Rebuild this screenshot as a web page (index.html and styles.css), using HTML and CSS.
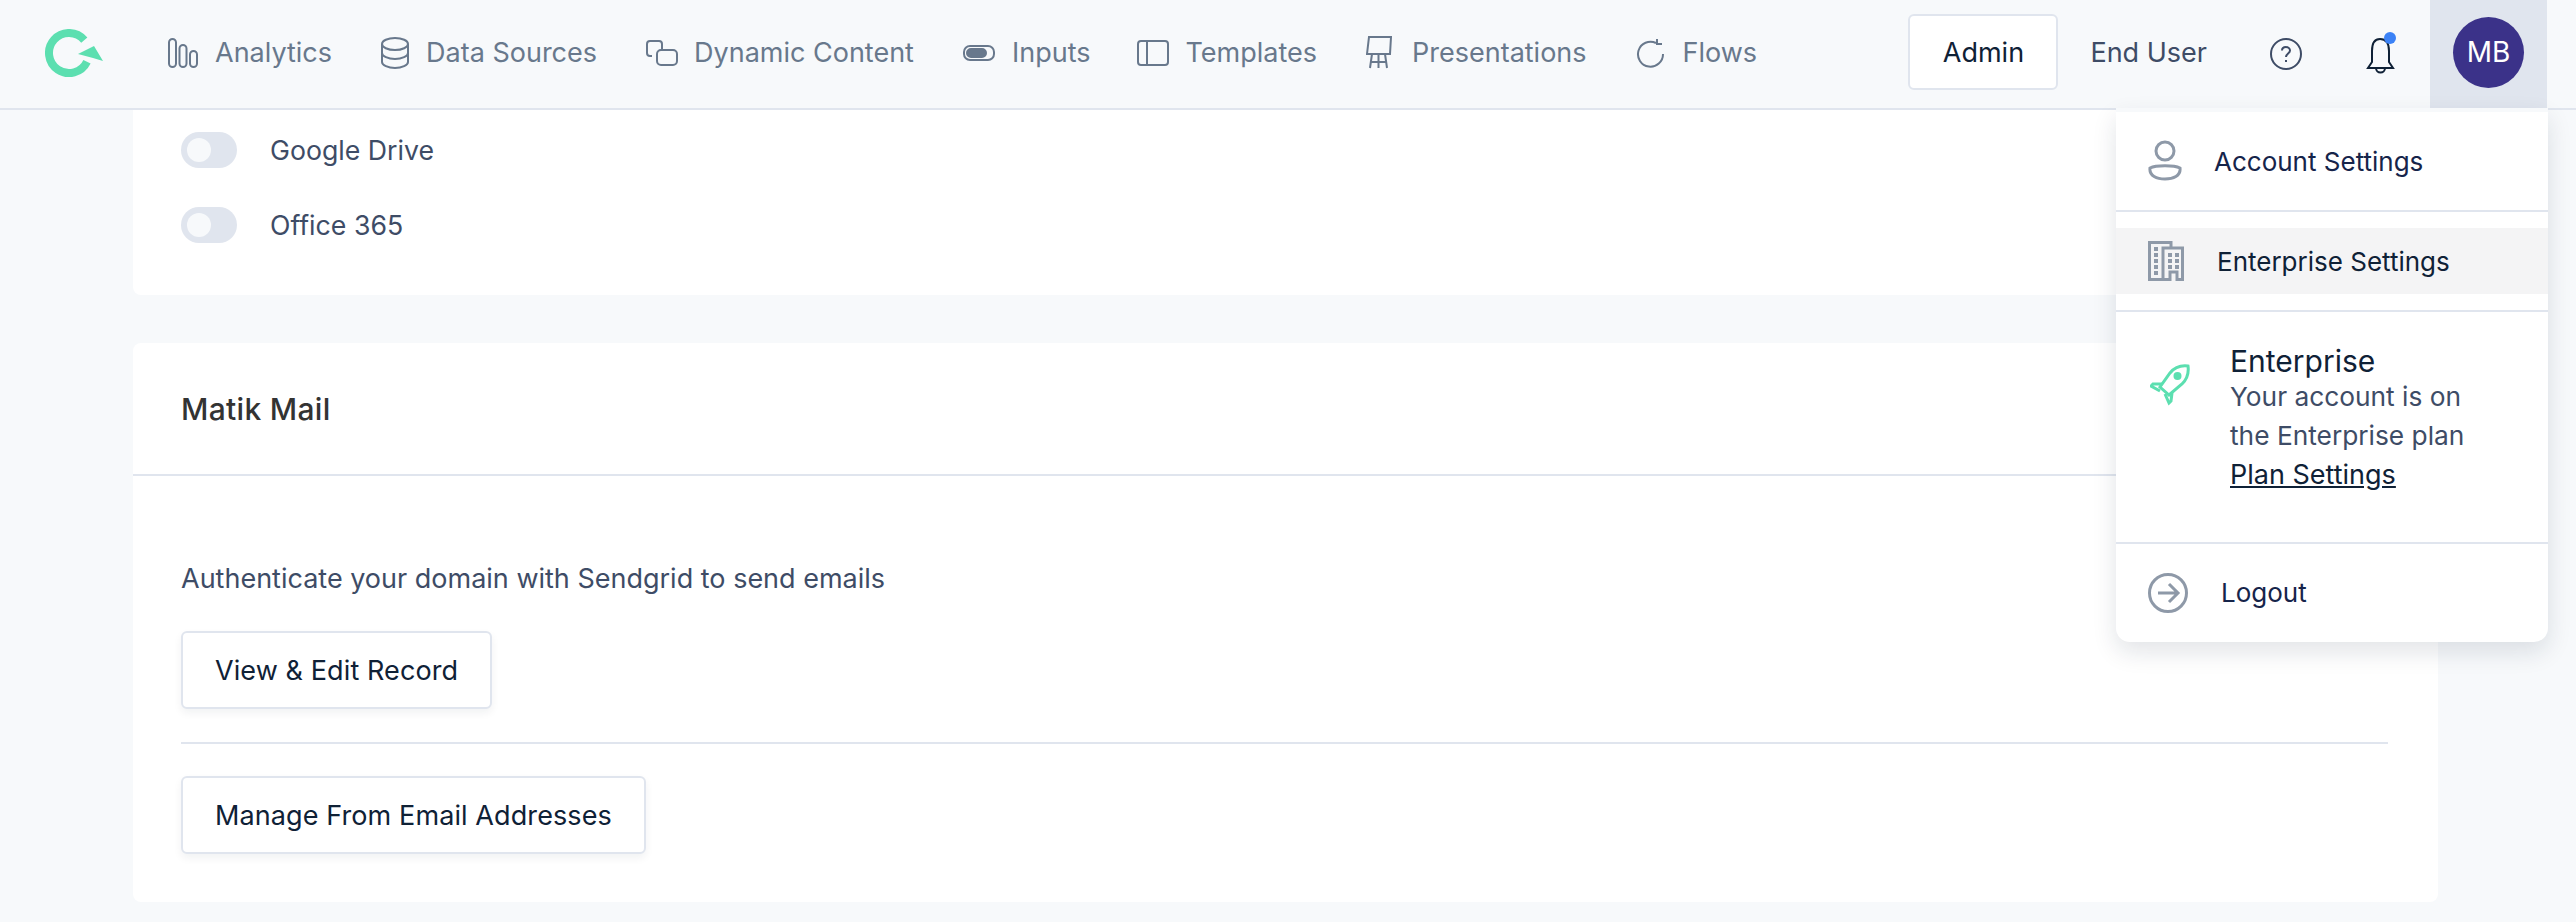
FILE: index.html
```html
<!DOCTYPE html>
<html lang="en">
<head>
    <meta charset="UTF-8">
    <meta name="viewport" content="width=device-width, initial-scale=1.0">
    <title>Enterprise Settings</title>
    <link rel="stylesheet" href="styles.css">
</head>
<body>
    <header class="topbar">
        <a class="logo" href="#">
            <svg width="60" height="50" viewBox="0 0 60 50"><path d="M39.300 11.100A20 20 0 1 0 42 32.700" fill="none" stroke="#5cdfb0" stroke-width="8"/><path d="M33 25L49 17L58 32L48 29Z" fill="#5cdfb0"/></svg>
        </a>
        <nav class="nav">
            <a class="nav-item" href="#">
                <svg width="30" height="30" viewBox="0 0 30 30" class="nav-icon"><rect x="1" y="1" width="7" height="28" rx="3.500"/><rect x="11.500" y="7" width="7" height="22" rx="3.500"/><rect x="22" y="13" width="7" height="16" rx="3.500"/></svg>
                Analytics
            </a>
            <a class="nav-item" href="#">
                <svg width="28" height="32" viewBox="0 0 28 32" class="nav-icon"><ellipse cx="14" cy="7" rx="13" ry="6"/><path d="M1 7V25C1 28 7 31 14 31S27 28 27 25V7M1 16C1 19 7 22 14 22S27 19 27 16"/></svg>
                Data Sources
            </a>
            <a class="nav-item nav-item-tight" href="#">
                <svg width="32" height="26" viewBox="0 0 32 26" class="nav-icon"><rect x="11" y="10" width="20" height="15" rx="4"/><path d="M6 16H4A3 3 0 0 1 1 13V4A3 3 0 0 1 4 1H13A3 3 0 0 1 16 4V10"/></svg>
                Dynamic Content
            </a>
            <a class="nav-item" href="#">
                <svg width="32" height="16" viewBox="0 0 32 16" class="nav-icon"><rect x="1" y="1" width="30" height="14" rx="6"/><rect class="nav-icon-fill" x="4" y="4" width="19" height="8" rx="4"/></svg>
                Inputs
            </a>
            <a class="nav-item nav-item-shift" href="#">
                <svg width="32" height="26" viewBox="0 0 32 26" class="nav-icon"><rect x="1" y="1" width="30" height="24" rx="3"/><path d="M10 1V25"/></svg>
                Templates
            </a>
            <a class="nav-item nav-item-wide" href="#">
                <svg width="26" height="33" viewBox="0 0 26 33" class="nav-icon"><path d="M3 1H25L24 18H1ZM1 18H24M6 18L4 32M19 18L21 32M12.500 18V32M5 26H20"/></svg>
                Presentations
            </a>
            <a class="nav-item" href="#">
                <svg width="30" height="32" viewBox="0 0 30 32" class="nav-icon"><path d="M20 6A12.500 12.500 0 1 0 27 17M21 2V7H26"/></svg>
                Flows
            </a>
        </nav>
        <div class="topbar-right">
            <a class="mode-btn" href="#">Admin</a>
            <a class="mode-link" href="#">End User</a>
            <a class="help" href="#">
                <svg width="32" height="32" viewBox="0 0 32 32" fill="none" stroke="#3e4c66" stroke-width="2"><circle cx="16" cy="16" r="15"/><path d="M12 12.500C12 10 14 9 16 9S20 10.500 20 12.500C20 15.500 16 15.500 16 19"/><path d="M16 22V24"/></svg>
            </a>
            <a class="bell" href="#">
                <svg width="36" height="44" viewBox="0 0 36 44"><path d="M9 19C9 10 12 7 17 7S26 10 26 19V30L30 36H5L9 30ZM13 36A4.500 4.500 0 0 0 22 36" fill="none" stroke="#0f2136" stroke-width="2"/><circle cx="27" cy="6" r="6" fill="#3b82f6"/></svg>
            </a>
            <div class="avatar-wrap"><div class="avatar">MB</div></div>
        </div>
    </header>

    <main class="content">
        <section class="card card-top">
            <div class="toggle-row"><span class="toggle"><span class="knob"></span></span>Google Drive</div>
            <div class="toggle-row"><span class="toggle"><span class="knob"></span></span>Office 365</div>
        </section>
        <section class="card">
            <h2 class="card-title">Matik Mail</h2>
            <div class="card-body">
                <p class="card-text">Authenticate your domain with Sendgrid to send emails</p>
                <button class="btn">View &amp; Edit Record</button>
                <hr class="rule">
                <button class="btn">Manage From Email Addresses</button>
            </div>
        </section>
    </main>

    <div class="menu">
        <a class="menu-row menu-account" href="#">
            <svg width="34" height="42" viewBox="0 0 34 42" class="menu-icon"><circle cx="17" cy="11" r="9"/><path d="M2 28C8 25 26 25 32 28C33 36 25 39 17 39S1 36 2 28Z"/></svg>
            Account Settings
        </a>
        <a class="menu-row menu-enterprise" href="#">
            <svg width="36" height="40" viewBox="0 0 36 40" class="building"><path class="building-line" d="M1.500 40V1.500H23V7M1 38.500H15M15 40V7H34.500V40M15 38.500H22V31H29V38.500H35"/><path d="M6 6h4v4H6zM6 12h4v4H6zM6 18h4v4H6zM6 24h4v4H6zM6 30h4v4H6zM20 12h4v4h-4zM27 12h4v4h-4zM20 18h4v4h-4zM27 18h4v4h-4zM20 24h4v4h-4zM27 24h4v4h-4z"/></svg>
            Enterprise Settings
        </a>
        <div class="plan">
            <svg width="40" height="42" viewBox="0 0 40 42" class="rocket"><path d="M38 2C30 1 24 4 20 9L10 23L19 31L32 20C37 15 39 9 38 2Z"/><path d="M12 20L3 20L1 22L10 27M22 29L21 37L19 39L15 30"/><circle cx="27.500" cy="12" r="4" class="rocket-dot"/></svg>
            <div class="plan-text">
                <div class="plan-name">Enterprise</div>
                <div class="plan-desc">Your account is on<br>the Enterprise plan</div>
                <a class="plan-link" href="#">Plan Settings</a>
            </div>
        </div>
        <a class="menu-row menu-logout" href="#">
            <svg width="40" height="40" viewBox="0 0 40 40" class="menu-icon"><circle cx="20" cy="20" r="18.500"/><path d="M10 20H30M21 11L30 20L21 29"/></svg>
            Logout
        </a>
    </div>
</body>
</html>
```

FILE: styles.css
```css
body {
    margin: 0;
    height: 922px;
    overflow: hidden;
    background-color: #f7f9fb;
    font-family: Inter, sans-serif;
    font-size: 27px;
    color: #3e4c66;
}
a {
    color: inherit;
    text-decoration: none;
}

.topbar {
    display: flex;
    align-items: center;
    height: 110px;
    box-sizing: border-box;
    border-bottom: 2px solid #e0e5ee;
    padding-left: 45px;
}
.logo {
    display: flex;
    width: 123px;
}
.nav {
    display: flex;
    gap: 49px;
    margin-bottom: 3px;
    color: #68788c;
}
.nav-item {
    display: flex;
    align-items: center;
    gap: 17px;
}
.nav-item-tight {
    gap: 16px;
}
.nav-item-shift {
    margin-left: -3px;
}
.nav-item-wide {
    gap: 20px;
}
.nav-icon {
    fill: none;
    stroke: #68788c;
    stroke-width: 2;
}
.nav-icon-fill {
    fill: #68788c;
}
.topbar-right {
    display: flex;
    align-items: center;
    margin-left: auto;
    margin-right: 29px;
    height: 108px;
}
.mode-btn {
    display: flex;
    align-items: center;
    justify-content: center;
    width: 150px;
    height: 76px;
    box-sizing: border-box;
    margin-bottom: 4px;
    background: #fff;
    border: 2px solid #e0e5ee;
    border-radius: 6px;
    color: #0f2136;
}
.mode-link {
    margin-left: 32px;
    margin-bottom: 3px;
}
.help {
    display: flex;
    margin-left: 63px;
}
.bell {
    display: flex;
    margin-left: 61px;
}
.avatar-wrap {
    display: flex;
    align-items: center;
    justify-content: center;
    width: 117px;
    height: 108px;
    margin-left: 31px;
    background: #e0e5ee;
}
.avatar {
    display: flex;
    align-items: center;
    justify-content: center;
    width: 71px;
    height: 71px;
    margin-bottom: 4px;
    border-radius: 50%;
    background: #3b3289;
    color: #fff;
    font-size: 28px;
}

.content {
    display: flex;
    flex-direction: column;
    gap: 48px;
    margin: 0 138px 0 133px;
}
.card {
    background: #fff;
    border-radius: 8px;
}
.card-top {
    height: 185px;
    border-radius: 0 0 8px 8px;
    padding: 22px 48px 0;
    box-sizing: border-box;
}
.toggle-row {
    display: flex;
    align-items: center;
    gap: 33px;
    height: 36px;
    margin-bottom: 39px;
    font-size: 26.7px;
}
.toggle {
    display: flex;
    align-items: center;
    width: 56px;
    height: 36px;
    padding-left: 6px;
    box-sizing: border-box;
    border-radius: 18px;
    background: #e0e5ee;
}
.knob {
    width: 24px;
    height: 24px;
    border-radius: 50%;
    background: #f7f9fb;
}
.card-title {
    margin: 0;
    padding: 0 48px;
    height: 133px;
    line-height: 133px;
    font-size: 30px;
    font-weight: 500;
    letter-spacing: 0.3px;
    color: #333;
    border-bottom: 2px solid #e0e5ee;
    box-sizing: border-box;
}
.card-body {
    padding: 87px 50px 48px 48px;
}
.card-text {
    margin: 0 0 36px;
    line-height: 32px;
}
.btn {
    display: block;
    height: 78px;
    padding: 0 32px;
    background: #fff;
    border: 2px solid #e0e5ee;
    border-radius: 6px;
    box-shadow: 0 4px 8px rgba(15, 33, 54, 0.06);
    font-family: inherit;
    font-size: 27px;
    letter-spacing: 0.1px;
    color: #0f2136;
}
.rule {
    height: 2px;
    margin: 33px 0 32px;
    border: 0;
    background: #e0e5ee;
}

.menu {
    position: absolute;
    top: 108px;
    left: 2116px;
    width: 432px;
    height: 534px;
    box-sizing: border-box;
    background: #fff;
    border-top: 4px solid #f7f9fb;
    border-radius: 0 0 14px 14px;
    box-shadow: 0 10px 24px rgba(15, 33, 54, 0.12);
    font-size: 26px;
    color: #16244a;
}
.menu-row {
    display: flex;
    align-items: center;
}
.menu-icon {
    fill: none;
    stroke: #8e99a8;
    stroke-width: 3;
}
.menu-account {
    height: 98px;
    padding-left: 32px;
    gap: 32px;
    border-bottom: 2px solid #e0e5ee;
}
.menu-enterprise {
    height: 66px;
    margin: 16px 0;
    padding-left: 32px;
    gap: 33px;
    background: #f4f4f5;
    color: #0f2136;
}
.building {
    fill: #8e99a8;
}
.building-line {
    fill: none;
    stroke: #8e99a8;
    stroke-width: 3;
}
.plan {
    display: flex;
    height: 234px;
    padding: 33px 0 0 34px;
    box-sizing: border-box;
    border-top: 2px solid #e0e5ee;
    border-bottom: 2px solid #e0e5ee;
}
.rocket {
    fill: none;
    stroke: #5cdfb0;
    stroke-width: 3;
    margin-top: 19px;
}
.rocket-dot {
    fill: #5cdfb0;
    stroke: none;
}
.plan-text {
    margin-left: 40px;
    line-height: 39px;
}
.plan-name {
    font-size: 30px;
    line-height: 32px;
    color: #0f2136;
}
.plan-desc {
    font-size: 26.3px;
    color: #3e4c66;
}
.plan-link {
    font-size: 27px;
    color: #0f2136;
    text-decoration: underline;
}
.menu-logout {
    height: 97px;
    padding-left: 32px;
    gap: 33px;
}
```
